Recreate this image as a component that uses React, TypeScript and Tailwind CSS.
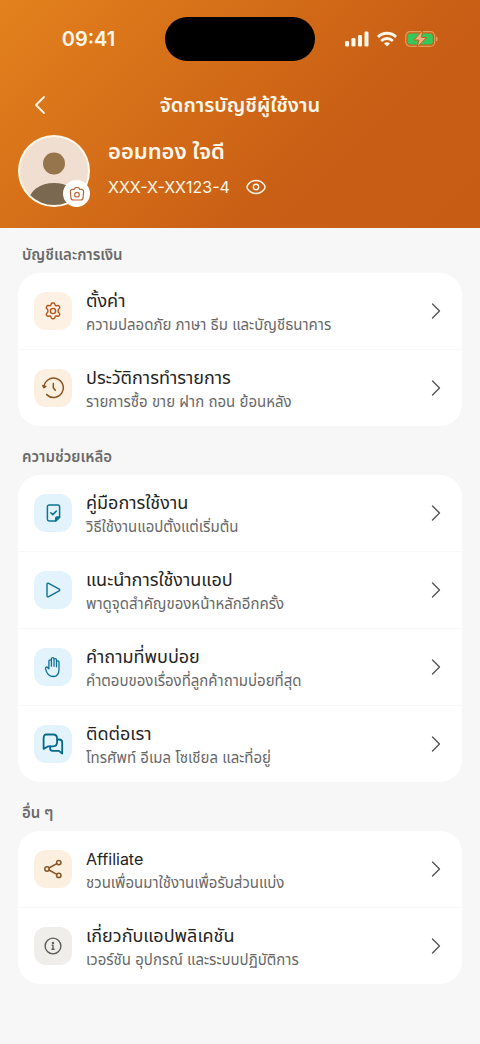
import type { ReactNode } from 'react';

interface MenuItem {
  title: string;
  detail: string;
  tile: string;
  icon: ReactNode;
  latin?: boolean;
}

interface MenuSection {
  heading: string;
  items: MenuItem[];
}

const Glyph = ({ children, width = 1.4 }: { children: ReactNode; width?: number }) => (
  <svg
    viewBox="0 0 24 24"
    className="size-6"
    fill="none"
    stroke="currentColor"
    strokeWidth={width}
    strokeLinecap="round"
    strokeLinejoin="round"
    aria-hidden="true"
  >
    {children}
  </svg>
);

const GearIcon = () => (
  <Glyph>
    <path d="M10.300 4.900c.2-.6.6-.9 1.200-.9h1c.6 0 1 .3 1.200.9l.4 1.200c.2.5.8.8 1.400.7l1.300-.3c.6-.1 1 .1 1.300.6l.5.9c.3.5.2 1-.2 1.400l-.8.9c-.5.5-.5.9-.5 1.600s0 1.100.5 1.600l.8.9c.4.4.5.9.2 1.400l-.5.9c-.3.5-.7.7-1.300.6l-1.300-.3c-.6-.1-1.200.2-1.400.7l-.4 1.200c-.2.6-.6.9-1.200.9h-1c-.6 0-1-.3-1.200-.9l-.4-1.200c-.2-.5-.8-.8-1.400-.7l-1.300.3c-.6.1-1-.1-1.300-.6l-.5-.9c-.3-.5-.2-1 .2-1.400l.8-.9c.5-.5.5-.9.5-1.600s0-1.100-.5-1.600l-.8-.9c-.4-.4-.5-.9-.2-1.400l.5-.9c.3-.5.7-.7 1.300-.6l1.300.3c.6.1 1.200-.2 1.400-.7z" />
    <circle cx="12" cy="12" r="2.600" />
  </Glyph>
);

const HistoryIcon = () => (
  <Glyph width={1.5}>
    <path d="M2.900 11.600A9.700 9.700 0 1 1 5.700 18.600" />
    <path d="M1.800 9.600l1.100 2 1.900-1.200z" fill="currentColor" />
    <path d="M12.300 7.600v4.200l2 2.400" />
  </Glyph>
);

const GuideIcon = () => (
  <Glyph width={1.5}>
    <path d="M14.700 20H8.100c-1 0-1.700-.7-1.700-1.700V5.700c0-1 .7-1.700 1.700-1.700h8.800c1 0 1.700.7 1.700 1.700v10.400z" />
    <path d="M14.700 20v-2.600c0-.8.500-1.300 1.300-1.300h2.600z" fill="currentColor" />
    <path d="M9.800 11.700l2 1.900 3.500-3.500" />
  </Glyph>
);

const PlayIcon = () => (
  <Glyph>
    <path d="M6 6v12c0 .7.600 1 1.200.8l11-6c.7-.4.700-1.200 0-1.600l-11-6C6.600 5 6 5.300 6 6z" />
  </Glyph>
);

const HandIcon = () => (
  <Glyph width={1.3}>
    <path d="M7.900 13.800V6.200c0-1.700 2.500-1.700 2.500 0v5-7.300c0-1.700 2.600-1.700 2.600 0v7.300-6.400c0-1.700 2.500-1.700 2.500 0v7-4.700c0-1.700 2.500-1.700 2.500 0V14c0 5-2 7.500-5.600 7.500-4.700 0-6.900-3.500-7.900-7.900-.3-1.700 1.500-2.100 2.200-.9z" />
  </Glyph>
);

const ChatIcon = () => (
  <Glyph width={1.8}>
    <path d="M4.700 2.500h7.400c2.400 0 4 1.600 4 4v3.800c0 2.400-1.600 4-4 4H7.300l-4.700 2.600V6.500c0-2.400.8-4 2.100-4z" />
    <path d="M16.300 7.500h1.900c2 0 3 1.200 3 3v11.100l-3.300-2.700h-6.200c-1.600 0-2.600-.9-2.600-2.600v-1.900" />
  </Glyph>
);

const ShareIcon = () => (
  <Glyph width={1.5}>
    <circle cx="6" cy="12" r="2.200" />
    <circle cx="17.800" cy="5.600" r="2.200" />
    <circle cx="17.800" cy="18.400" r="2.200" />
    <path d="M8 11l7.800-4.300M8 13l7.800 4.300" />
  </Glyph>
);

const InfoIcon = () => (
  <Glyph>
    <circle cx="12" cy="12" r="7.900" />
    <path d="M11.200 11.200H12v4M10.900 15.300h2.200" />
    <circle cx="12" cy="8.900" r=".5" fill="currentColor" />
  </Glyph>
);

const sections: MenuSection[] = [
  {
    heading: 'บัญชีและการเงิน',
    items: [
      {
        title: 'ตั้งค่า',
        detail: 'ความปลอดภัย ภาษา ธีม และบัญชีธนาคาร',
        tile: 'bg-[#fdf1e3] text-[#b4551a]',
        icon: <GearIcon />,
      },
      {
        title: 'ประวัติการทำรายการ',
        detail: 'รายการซื้อ ขาย ฝาก ถอน ย้อนหลัง',
        tile: 'bg-[#fbf0df] text-[#875526]',
        icon: <HistoryIcon />,
      },
    ],
  },
  {
    heading: 'ความช่วยเหลือ',
    items: [
      {
        title: 'คู่มือการใช้งาน',
        detail: 'วิธีใช้งานแอปตั้งแต่เริ่มต้น',
        tile: 'bg-[#e3f3fb] text-[#0e7397]',
        icon: <GuideIcon />,
      },
      {
        title: 'แนะนำการใช้งานแอป',
        detail: 'พาดูจุดสำคัญของหน้าหลักอีกครั้ง',
        tile: 'bg-[#e3f3fb] text-[#0e7397]',
        icon: <PlayIcon />,
      },
      {
        title: 'คำถามที่พบบ่อย',
        detail: 'คำตอบของเรื่องที่ลูกค้าถามบ่อยที่สุด',
        tile: 'bg-[#e3f3fb] text-[#0e7397]',
        icon: <HandIcon />,
      },
      {
        title: 'ติดต่อเรา',
        detail: 'โทรศัพท์ อีเมล โซเชียล และที่อยู่',
        tile: 'bg-[#e3f3fb] text-[#046a8c]',
        icon: <ChatIcon />,
      },
    ],
  },
  {
    heading: 'อื่น ๆ',
    items: [
      {
        title: 'Affiliate',
        detail: 'ชวนเพื่อนมาใช้งานเพื่อรับส่วนแบ่ง',
        tile: 'bg-[#fbf0df] text-[#875526]',
        icon: <ShareIcon />,
        latin: true,
      },
      {
        title: 'เกี่ยวกับแอปพลิเคชัน',
        detail: 'เวอร์ชัน อุปกรณ์ และระบบปฏิบัติการ',
        tile: 'bg-[#f0eeeb] text-[#5c5c5c]',
        icon: <InfoIcon />,
      },
    ],
  },
];

const StatusBar = () => (
  <div className="grid grid-cols-[1fr_150px_1fr] items-center pt-[17px]">
    <span className="pl-3 text-center text-xl leading-6 font-semibold">09:41</span>
    <div className="h-11 rounded-full bg-black" />
    <div className="flex items-center justify-center gap-2 pr-3">
      <svg viewBox="0 0 24 16" className="h-4 w-6" fill="currentColor" aria-label="Signal">
        <rect x="0" y="10" width="4" height="5.500" rx="1.300" />
        <rect x="6.500" y="7" width="4" height="8.500" rx="1.300" />
        <rect x="13" y="4" width="4" height="11.500" rx="1.300" />
        <rect x="19.500" y="0.500" width="4" height="15" rx="1.300" />
      </svg>
      <svg viewBox="0 0 20 16" className="h-4 w-5" fill="none" stroke="currentColor" strokeWidth="2.800" aria-label="Wi-Fi">
        <path d="M1 6a12.700 12.700 0 0 1 18 0" />
        <path d="M4.200 9.900a8.200 8.200 0 0 1 11.600 0" />
        <path d="M10 15.500l-3-3a4.200 4.200 0 0 1 6 0z" fill="currentColor" stroke="none" />
      </svg>
      <svg viewBox="0 0 33 16" className="h-4 w-[33px]" aria-label="Battery">
        <rect x="0.700" y="0.700" width="29" height="14.600" rx="4.500" fill="none" stroke="#e39a5c" strokeWidth="1.200" />
        <rect x="2.600" y="2.600" width="25.200" height="10.800" rx="2.800" fill="#35c759" />
        <path d="M31 5.500c1.500.6 1.700 1.300 1.700 2.500S32.500 9.900 31 10.500z" fill="#e39a5c" />
        <path d="M17.500 -0.500L9 9h5L12 16.500l9.500-10h-5z" fill="#f0b184" stroke="#c96217" strokeWidth="1" />
      </svg>
    </div>
  </div>
);

const MenuRow = ({ item }: { item: MenuItem }) => (
  <li>
    <a href="#" className="flex h-[76px] items-center gap-3.5 px-4">
      <span className={`flex size-[38px] shrink-0 items-center justify-center rounded-xl ${item.tile}`}>
        {item.icon}
      </span>
      <span className="flex min-w-0 flex-1 flex-col pt-1">
        <span className={`leading-6 text-[#242424] ${item.latin ? 'text-base' : 'text-lg'}`}>{item.title}</span>
        <span className="text-[15px] leading-6 text-[#686868]">{item.detail}</span>
      </span>
      <svg viewBox="0 0 20 20" className="size-5 shrink-0 text-[#555]" fill="none" stroke="currentColor" strokeWidth="1.400" aria-hidden="true">
        <path d="M6.500 3l7 7-7 7" strokeLinecap="round" strokeLinejoin="round" />
      </svg>
    </a>
  </li>
);

const App = () => (
  <div className="min-h-screen bg-[#f7f7f7] font-['Inter','Noto_Sans_Thai','Noto_Sans',sans-serif]">
    <header className="bg-[linear-gradient(135deg,#e3811d_0%,#c95f15_65%,#c75d15_100%)] pb-[21px] text-[#fff8ea]">
      <StatusBar />

      <div className="mt-6 grid grid-cols-[44px_1fr_44px] items-center px-4.5">
        <button type="button" aria-label="กลับ" className="flex h-10 items-center justify-center">
          <svg viewBox="0 0 20 20" className="size-5" fill="none" stroke="currentColor" strokeWidth="1.800" aria-hidden="true">
            <path d="M14 2L6 10l8 8" strokeLinecap="round" strokeLinejoin="round" />
          </svg>
        </button>
        <h1 className="text-center text-xl leading-7 font-semibold">จัดการบัญชีผู้ใช้งาน</h1>
      </div>

      <div className="mt-2.5 flex items-center gap-4.5 px-4.5">
        <div className="relative">
          <svg viewBox="0 0 72 72" className="size-18" aria-hidden="true">
            <clipPath id="face">
              <circle cx="36" cy="36" r="34" />
            </clipPath>
            <circle cx="36" cy="36" r="36" fill="#fff8ea" />
            <circle cx="36" cy="36" r="34" fill="#f0dfd0" />
            <circle cx="36" cy="28.500" r="11" fill="#96744c" />
            <ellipse cx="36" cy="66" rx="25" ry="18" fill="#7b6850" clipPath="url(#face)" />
          </svg>
          <button
            type="button"
            aria-label="เปลี่ยนรูปโปรไฟล์"
            className="absolute right-0 bottom-0 flex size-[27px] items-center justify-center rounded-full bg-white text-[#b9673a]"
          >
            <svg viewBox="0 0 18 18" className="size-[18px]" fill="none" stroke="currentColor" strokeWidth="1.200" strokeLinejoin="round" aria-hidden="true">
              <path d="M6.100 4.400l.8-1.300c.3-.4.600-.6 1.100-.6h2c.5 0 .8.200 1.100.6l.8 1.300h1.400c1.500 0 2.500 1 2.300 2.500l-.5 5.700c-.1 1.400-1.100 2.400-2.500 2.400H5.400c-1.400 0-2.400-1-2.500-2.400l-.5-5.700c-.2-1.500.8-2.500 2.300-2.500z" />
              <circle cx="9" cy="9.700" r="2.300" />
            </svg>
          </button>
        </div>
        <div className="pb-1">
          <p className="mb-1 text-[22px] leading-8 font-semibold">ออมทอง ใจดี</p>
          <div className="flex items-center gap-4">
            <span className="text-base leading-8">XXX-X-XX123-4</span>
            <button type="button" aria-label="แสดงเลขบัญชี">
              <svg viewBox="0 0 20 20" className="size-5" fill="none" stroke="currentColor" strokeWidth="1.400" aria-hidden="true">
                <path d="M1 10c0-1.200.5-2 1.200-2.800C4 5 6.800 3.500 10 3.500s6 1.500 7.800 3.700c.7.800 1.200 1.600 1.200 2.800s-.5 2-1.200 2.800C16 15 13.200 16.500 10 16.500S4 15 2.200 12.800C1.500 12 1 11.200 1 10z" />
                <circle cx="10" cy="10" r="2.700" />
              </svg>
            </button>
          </div>
        </div>
      </div>
    </header>

    <main className="flex flex-col gap-[19px] px-4.5 pt-[15px] pb-15">
      {sections.map((section) => (
        <section key={section.heading}>
          <h2 className="px-1 pb-1.5 text-[15px] leading-6 font-semibold text-[#6b6b6b]">{section.heading}</h2>
          <ul className="divide-y divide-[#f7f7f7] rounded-[22px] bg-white">
            {section.items.map((item) => (
              <MenuRow key={item.title} item={item} />
            ))}
          </ul>
        </section>
      ))}
    </main>
  </div>
);

export default App;
